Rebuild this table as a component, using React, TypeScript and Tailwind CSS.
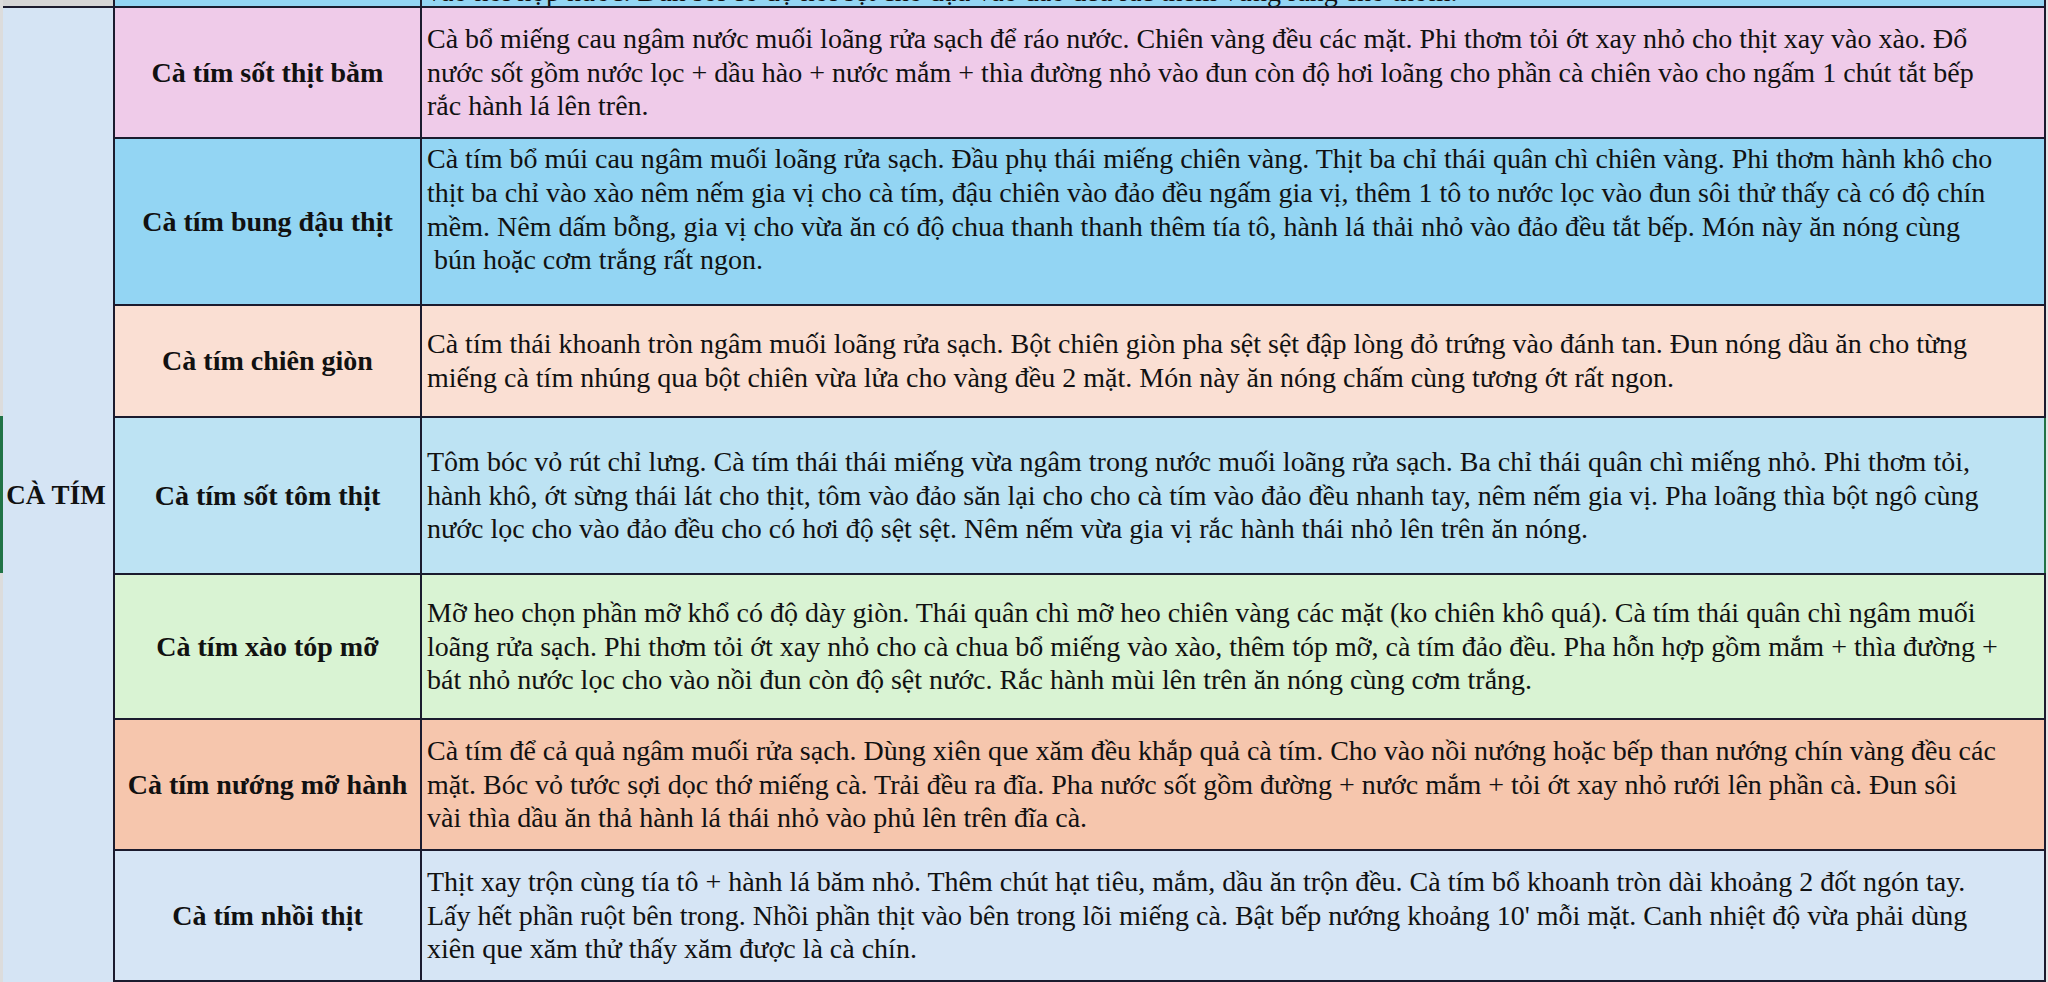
import type { ReactNode } from 'react'

type Row = {
  name: string
  bg: string
  h: string
  lines: string[]
  pad?: string
  selected?: boolean
}

// Excel-ish recipe sheet, group "CÀ TÍM"
const rows: Row[] = [
  {
    name: 'Cà tím sốt thịt bằm',
    bg: 'bg-[#efcbe9]',
    h: 'h-[131px]',
    lines: [
      'Cà bổ miếng cau ngâm nước muối loãng rửa sạch để ráo nước. Chiên vàng đều các mặt. Phi thơm tỏi ớt xay nhỏ cho thịt xay vào xào. Đổ',
      'nước sốt gồm nước lọc + dầu hào + nước mắm + thìa đường nhỏ vào đun còn độ hơi loãng cho phần cà chiên vào cho ngấm 1 chút tắt bếp',
      'rắc hành lá lên trên.',
    ],
  },
  {
    name: 'Cà tím bung đậu thịt',
    bg: 'bg-[#93d5f3]',
    h: 'h-[167px]',
    pad: 'pb-[24px]',
    lines: [
      'Cà tím bổ múi cau ngâm muối loãng rửa sạch. Đầu phụ thái miếng chiên vàng. Thịt ba chỉ thái quân chì chiên vàng. Phi thơm hành khô cho',
      'thịt ba chỉ vào xào nêm nếm gia vị cho cà tím, đậu chiên vào đảo đều ngấm gia vị, thêm 1 tô to nước lọc vào đun sôi thử thấy cà có độ chín',
      'mềm. Nêm dấm bỗng, gia vị cho vừa ăn có độ chua thanh thanh thêm tía tô, hành lá thải nhỏ vào đảo đều tắt bếp. Món này ăn nóng cùng',
      ' bún hoặc cơm trắng rất ngon.',
    ],
  },
  {
    name: 'Cà tím chiên giòn',
    bg: 'bg-[#fadfd3]',
    h: 'h-[112px]',
    lines: [
      'Cà tím thái khoanh tròn ngâm muối loãng rửa sạch. Bột chiên giòn pha sệt sệt đập lòng đỏ trứng vào đánh tan. Đun nóng dầu ăn cho từng',
      'miếng cà tím nhúng qua bột chiên vừa lửa cho vàng đều 2 mặt. Món này ăn nóng chấm cùng tương ớt rất ngon.',
    ],
  },
  {
    name: 'Cà tím sốt tôm thịt',
    bg: 'bg-[#bde3f3]',
    h: 'h-[157px]',
    selected: true,
    lines: [
      'Tôm bóc vỏ rút chỉ lưng. Cà tím thái thái miếng vừa ngâm trong nước muối loãng rửa sạch. Ba chỉ thái quân chì miếng nhỏ. Phi thơm tỏi,',
      'hành khô, ớt sừng thái lát cho thịt, tôm vào đảo săn lại cho cho cà tím vào đảo đều nhanh tay, nêm nếm gia vị. Pha loãng thìa bột ngô cùng',
      'nước lọc cho vào đảo đều cho có hơi độ sệt sệt. Nêm nếm vừa gia vị rắc hành thái nhỏ lên trên ăn nóng.',
    ],
  },
  {
    name: 'Cà tím xào tóp mỡ',
    bg: 'bg-[#d9f3d3]',
    h: 'h-[145px]',
    lines: [
      'Mỡ heo chọn phần mỡ khổ có độ dày giòn. Thái quân chì mỡ heo chiên vàng các mặt (ko chiên khô quá). Cà tím thái quân chì ngâm muối',
      'loãng rửa sạch. Phi thơm tỏi ớt xay nhỏ cho cà chua bổ miếng vào xào, thêm tóp mỡ, cà tím đảo đều. Pha hỗn hợp gồm mắm + thìa đường +',
      'bát nhỏ nước lọc cho vào nồi đun còn độ sệt nước. Rắc hành mùi lên trên ăn nóng cùng cơm trắng.',
    ],
  },
  {
    name: 'Cà tím nướng mỡ hành',
    bg: 'bg-[#f6c6ad]',
    h: 'h-[131px]',
    lines: [
      'Cà tím để cả quả ngâm muối rửa sạch. Dùng xiên que xăm đều khắp quả cà tím. Cho vào nồi nướng hoặc bếp than nướng chín vàng đều các',
      'mặt. Bóc vỏ tước sợi dọc thớ miếng cà. Trải đều ra đĩa. Pha nước sốt gồm đường + nước mắm + tỏi ớt xay nhỏ rưới lên phần cà. Đun sôi',
      'vài thìa dầu ăn thả hành lá thái nhỏ vào phủ lên trên đĩa cà.',
    ],
  },
  {
    name: 'Cà tím nhồi thịt',
    bg: 'bg-[#d6e5f5]',
    h: 'h-[133px] border-b-2',
    lines: [
      'Thịt xay trộn cùng tía tô + hành lá băm nhỏ. Thêm chút hạt tiêu, mắm, dầu ăn trộn đều. Cà tím bổ khoanh tròn dài khoảng 2 đốt ngón tay.',
      'Lấy hết phần ruột bên trong. Nhồi phần thịt vào bên trong lõi miếng cà. Bật bếp nướng khoảng 10\' mỗi mặt. Canh nhiệt độ vừa phải dùng',
      'xiên que xăm thử thấy xăm được là cà chín.',
    ],
  },
]

function Lines({ lines }: { lines: string[] }): ReactNode {
  return (
    <div className="flex flex-col">
      {lines.map((l, i) => (
        <div key={i} className="whitespace-pre leading-[33.7px]">
          {l}
        </div>
      ))}
    </div>
  )
}

export default function App() {
  return (
    <div
      className="w-[2048px] h-[982px] overflow-hidden flex bg-[#e6e6e6] text-[#111111]"
      style={{ fontFamily: '"Liberation Serif", "Times New Roman", serif' }}
    >
      {/* row-header strip, green where the selection sits */}
      <div className="w-[3px] flex flex-col shrink-0">
        <div className="h-[416px] bg-[#dcdcdc]" />
        <div className="h-[157px] bg-[#217346]" />
        <div className="flex-1 bg-[#dcdcdc]" />
      </div>

      {/* group column */}
      <div className="w-[110px] shrink-0 flex flex-col">
        <div className="h-[6px] bg-[#d6d6d6]" />
        <div className="flex-1 border-t-2 border-[#1b1b2e] bg-[#d5e4f4] flex items-center justify-center">
          <span className="text-[27px] font-bold -ml-[4px]">CÀ TÍM</span>
        </div>
      </div>

      <div className="w-[1933px] shrink-0 flex flex-col border-l-2 border-r-2 border-[#1b1b2e]">
        {/* tail of the previous row */}
        <div className="h-[6px] flex overflow-hidden">
          <div className="w-[307px] shrink-0 border-r-2 border-[#1b1b2e] bg-[#93d5f3]" />
          <div className="flex-1 bg-[#93d5f3] pl-[5px] text-[28px]">
            <div className="whitespace-pre leading-[33.7px] -mt-[25px]">
              vào nồi hợp nước. Đun sôi có độ hơi sệt cho đậu vào đảo đều rắc thêm vừng rang cho thơm.
            </div>
          </div>
        </div>

        {rows.map((r) => (
          <div key={r.name} className={`${r.h} flex border-t-2 border-[#1b1b2e] relative`}>
            <div
              className={`w-[307px] shrink-0 border-r-2 border-[#1b1b2e] ${r.bg} flex items-center justify-center text-[28px] font-bold`}
            >
              {r.name}
            </div>
            <div className={`flex-1 ${r.bg} flex items-center pl-[5px] text-[28px] ${r.pad ?? ''}`}>
              <Lines lines={r.lines} />
            </div>
            {r.selected && <div className="absolute -right-[2px] top-0 bottom-0 w-[2px] bg-[#217346]" />}
          </div>
        ))}
      </div>
    </div>
  )
}
